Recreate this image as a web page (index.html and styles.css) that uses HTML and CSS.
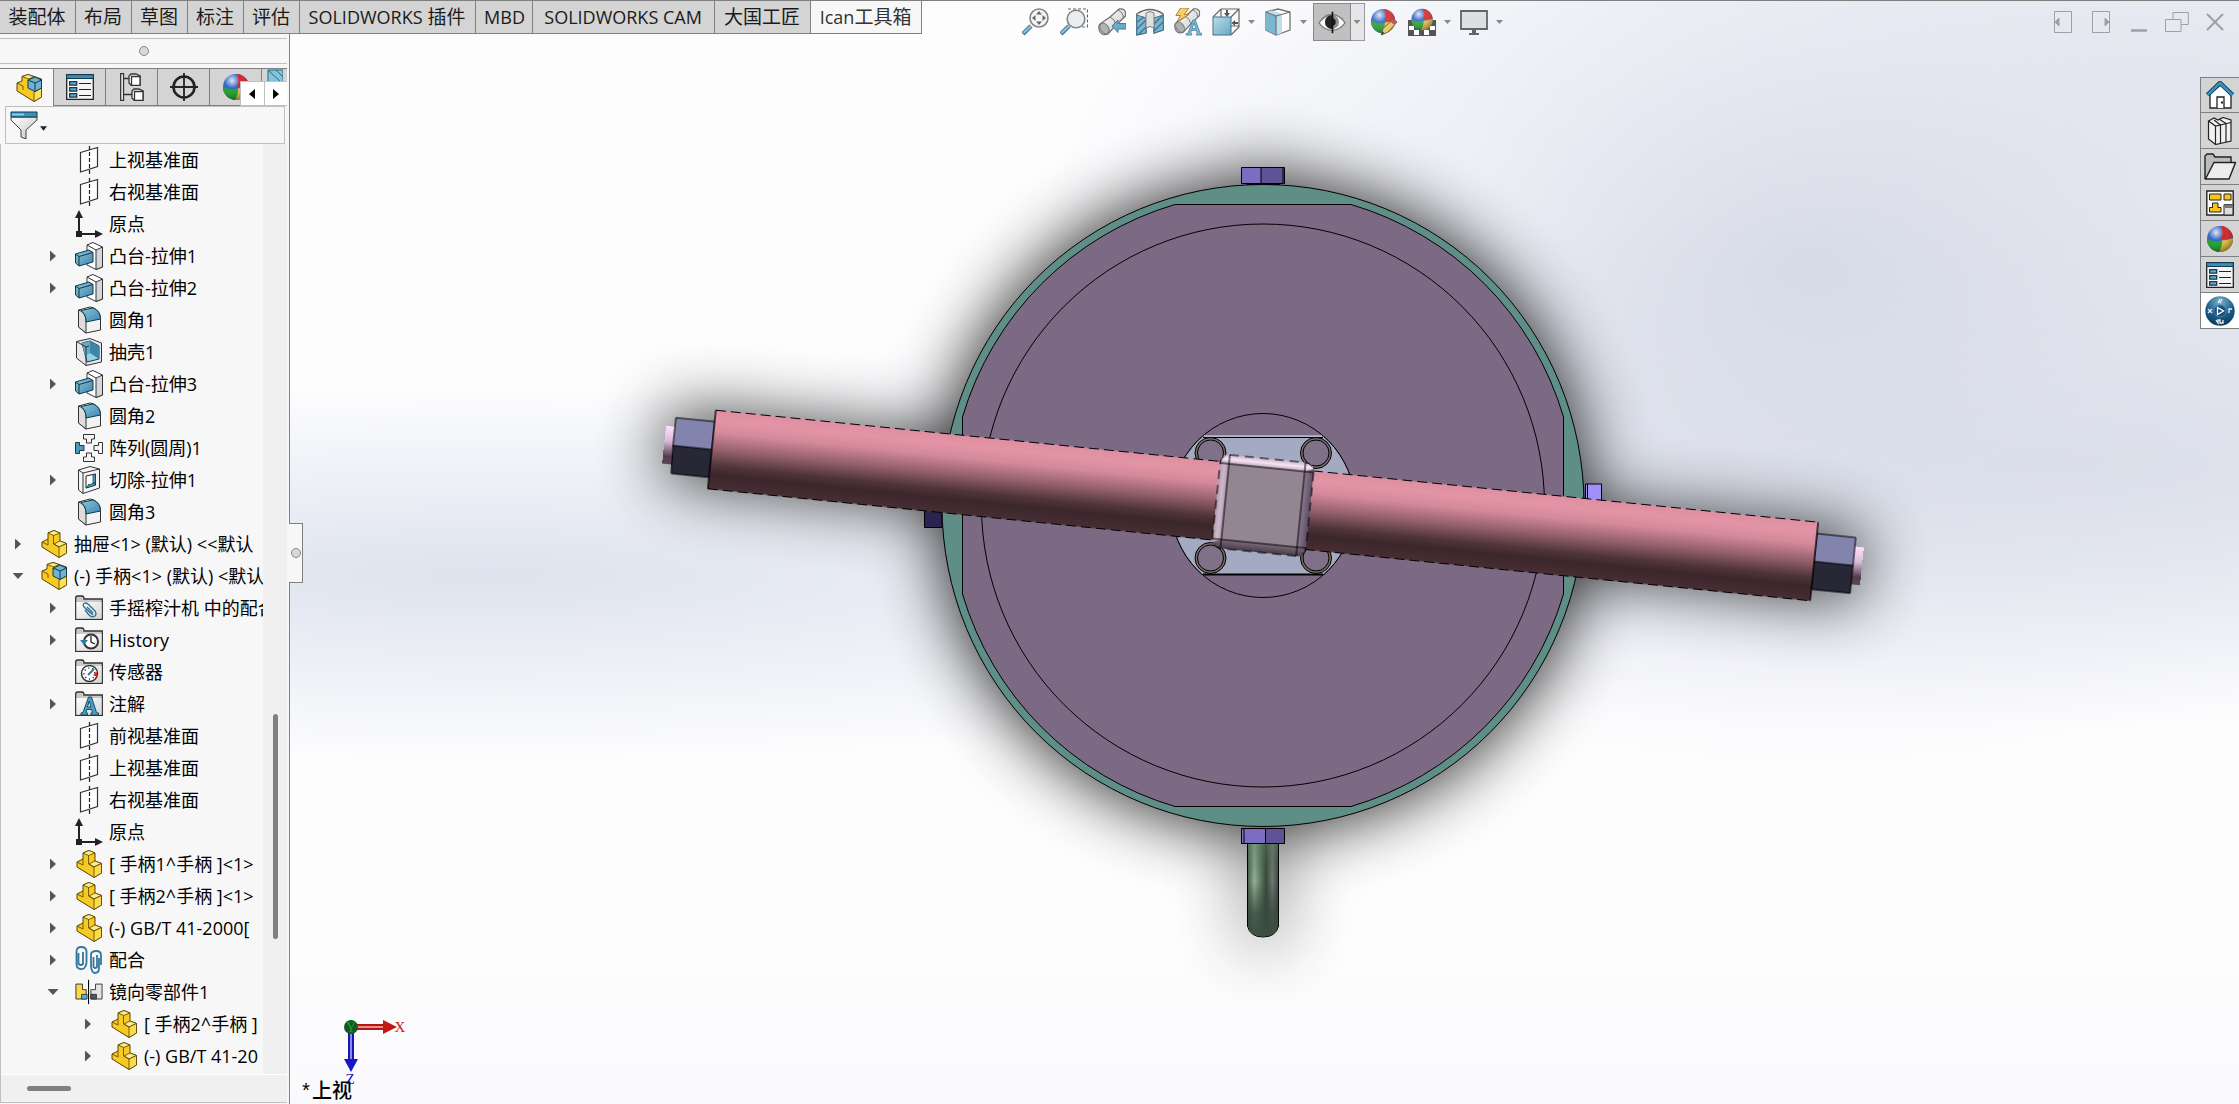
FILE: index.html
```html
<!DOCTYPE html>
<html lang="zh-CN">
<head>
<meta charset="utf-8">
<title>手摇榨汁机 - 装配体</title>
<link rel="stylesheet" href="styles.css">
</head>
<body>
<svg class="defs" width="0" height="0" aria-hidden="true">
  <defs>
    <linearGradient id="steel" x1="0" y1="0" x2="1" y2="1"><stop offset="0" stop-color="#fff"/><stop offset="1" stop-color="#c4c4c4"/></linearGradient>
    <linearGradient id="blue" x1="0" y1="0" x2="1" y2="1"><stop offset="0" stop-color="#8cc6de"/><stop offset="1" stop-color="#3d86a8"/></linearGradient>
    <linearGradient id="sky" x1="0" y1="0" x2="1" y2="1"><stop offset="0" stop-color="#b4dbea"/><stop offset="1" stop-color="#5b9fbd"/></linearGradient>
    <radialGradient id="gloss" cx=".35" cy=".25" r=".75"><stop offset="0" stop-color="#fff" stop-opacity=".85"/><stop offset=".4" stop-color="#fff" stop-opacity=".05"/><stop offset="1" stop-color="#000" stop-opacity=".35"/></radialGradient>
    <radialGradient id="disc" cx=".5" cy=".2" r=".9"><stop offset="0" stop-color="#7fb2d0"/><stop offset=".5" stop-color="#1f5f8b"/><stop offset="1" stop-color="#06304f"/></radialGradient>
    <linearGradient id="folderFill" x1="0" y1="0" x2="1" y2="1"><stop offset="0" stop-color="#fff"/><stop offset="1" stop-color="#d5d5d5"/></linearGradient>
  </defs>
  <symbol id="plane" viewBox="0 0 28 28"><path d="M5.500 6.500L22.500 1.500V20.500L5.500 26Z" fill="#fff" stroke="#333" stroke-width="1.200"/><path d="M14.500 0V28" stroke="#222" stroke-width="1.200" stroke-dasharray="4 2"/></symbol>
  <symbol id="origin" viewBox="0 0 28 28"><path d="M4 24V5M4 24H22" stroke="#222" stroke-width="2" fill="none"/><path d="M0 8L4 0L8 8ZM20 20L28 24L20 28ZM1 21h6v6H1Z" fill="#222"/></symbol>
  <symbol id="boss" viewBox="0 0 28 28"><path d="M12 3L18 0.500L27.500 5V25L21 27.500L12 23Z" fill="#fff" stroke="#333"/><path d="M21 8L27.500 5V25L21 27.500Z" fill="#d6d6d6" stroke="#333"/><path d="M12 3L21 8" stroke="#333"/><path d="M0.500 12L14 8L18 10.500V20L4 24L0.500 21Z" fill="url(#blue)" stroke="#12394c"/><path d="M0.500 12L4 14.500V24M4 14.500L18 10.500" stroke="#12394c" fill="none"/></symbol>
  <symbol id="fillet" viewBox="0 0 28 28"><path d="M3.500 4L15 1C22 2 25.500 7 25.500 13V24L11 27L3.500 21Z" fill="#f2f2f2" stroke="#333"/><path d="M3.500 4C9 6 11 10 11 16V27L3.500 21Z" fill="#ddd" stroke="#333"/><path d="M6 4.500L18 2C23 4 25.500 8 25.500 13L11 16C11 10 9 7 6 4.500Z" fill="url(#blue)" stroke="#12394c"/></symbol>
  <symbol id="shell" viewBox="0 0 28 28"><path d="M1.500 3.500L15 0.500L26.500 5V24L11 27.500L1.500 20Z" fill="#e8e8e8" stroke="#333"/><path d="M7 5L15 3L24 8V21L12 24Z" fill="#8fd2ea" stroke="#12394c"/><path d="M15 3L24 8V21L15 15Z" fill="#3d86a8"/><path d="M7 5L15 3V15L10 18Z" fill="#64a9c6"/><path d="M1.500 3.500L11 9V27.500M11 9L14 8" stroke="#333" fill="none"/></symbol>
  <symbol id="pattern" viewBox="0 0 28 28"><g fill="#f4f4f4" stroke="#333"><path d="M8.500 .5H19.500V5H16.500V9H11.500V5H8.500Z"/><path d="M8.500 27.500H19.500V23H16.500V19H11.500V23H8.500Z"/><path d="M27.500 8.500V19.500H23.500V16.500H19V11.500H23.500V8.500Z"/><path d="M.5 8.500V19.500H4.500V16.500H9V11.500H4.500V8.500Z" fill="#4c9abc"/></g></symbol>
  <symbol id="cut" viewBox="0 0 28 28"><path d="M3.500 4L15 .5L24.500 3V22L8 27.500L3.500 24Z" fill="#f4f4f4" stroke="#333"/><path d="M8 7L24.500 3M8 7V27.500M3.500 4L8 7" stroke="#333" fill="none"/><path d="M11 10L20.500 8V19L11 22Z" fill="#fff" stroke="#222"/><path d="M11 22L14 18V19L20.500 16V19ZM18 9L20.500 8V19L18 17Z" fill="#4c9abc" stroke="#12394c" stroke-width=".7"/></symbol>
  <symbol id="part" viewBox="0 0 28 28"><path d="M2 12L8 9V3L14 .5L20 3V11L26.500 13.500V23L19 27.500L2 17Z" fill="#f6c923" stroke="#5a4300"/><path d="M8 3L13.500 5.500L20 3L14 .5ZM14 14L20 11L26.500 13.500L19 17Z" fill="#fbe98a" stroke="#5a4300" stroke-width=".8"/><path d="M19 17L26.500 13.500V23L19 27.500Z" fill="#f9dc4d" stroke="#5a4300" stroke-width=".8"/><path d="M13.500 5.500V14L19 17M2 12L8 15V9" stroke="#5a4300" stroke-width=".8" fill="none"/></symbol>
  <symbol id="asm" viewBox="0 0 28 28"><path d="M2 9L7 7V2.500L13 .5L19 2.500L26.500 5V23L19 27.500L2 17Z" fill="#f6c923" stroke="#5a4300"/><path d="M7 2.500L13 .5L19 2.500L14 5Z" fill="#fbe98a" stroke="#5a4300" stroke-width=".8"/><path d="M19 18L26.500 14V23L19 27.500Z" fill="#fbe05c" stroke="#5a4300" stroke-width=".8"/><path d="M13 6L20 3L26.500 6V14L20 17.500L13 14Z" fill="#6fb2d2" stroke="#12394c"/><path d="M13 6L20 9L26.500 6M20 9V17.500" stroke="#12394c" fill="none"/><path d="M2 9L8 12V16" stroke="#5a4300" stroke-width=".8" fill="none"/></symbol>
  <symbol id="folder" viewBox="0 0 28 28"><path d="M.7 25.300V3.500Q.7 2 2.200 2H7Q9 2 9 5H27.300V25.300Z" fill="#c9c9c9" stroke="#333" stroke-width="1.300"/><path d="M1.500 8H26.600V24.600H1.500Z" fill="url(#folderFill)"/></symbol>
  <symbol id="f-mate" viewBox="0 0 28 28"><use href="#folder"/><path d="M18 21L9 13Q7 10 10 9Q12 9 13 10L20 17Q22 20 20 22Q17 24 14 21L10 16M18 19L12 13" fill="none" stroke="#2b6f92" stroke-width="1.300"/></symbol>
  <symbol id="f-hist" viewBox="0 0 28 28"><use href="#folder"/><circle cx="16" cy="15.500" r="7" fill="#fff" stroke="#333" stroke-width="2"/><path d="M16 10V16L20 18" stroke="#222" fill="none" stroke-width="1.300"/><path d="M5 14H13L9 19Z" fill="#2b7da3"/></symbol>
  <symbol id="f-sens" viewBox="0 0 28 28"><use href="#folder"/><circle cx="14.500" cy="15.500" r="8" fill="#fff" stroke="#333" stroke-width="1.400"/><circle cx="14.500" cy="15.500" r="5.500" fill="none" stroke="#222" stroke-width="1.500" stroke-dasharray="1 3"/><path d="M13 17L19 11" stroke="#2b7da3" stroke-width="2"/><path d="M18 17L22 14V19Z" fill="#d22"/></symbol>
  <symbol id="f-note" viewBox="0 0 28 28"><use href="#folder"/><path d="M6 25V23L8 22.500L13.500 7H16.500L21.500 22.500L23.500 23V25H16V23L17.500 22.500L16.600 19.500H11.800L11 22.500L12.500 23V25ZM12.500 17H16L14.300 11Z" fill="#4c9fc2" stroke="#0f4059" stroke-width=".9"/></symbol>
  <symbol id="mates" viewBox="0 0 28 28"><g fill="none" stroke="#33789a" stroke-width="1.800"><path d="M3.500 7V18Q6 20 8 18V6M1.500 18V5Q2 1 6 1Q11 1 11.500 5V17Q10 24 6 23Q1.500 23 1.500 18Z"/><path d="M18.500 11V21Q20 23 22 21V9M16 21V8Q17 5 21 5Q26 5 26 9V19M16 21Q17 27 20 27Q24 27 24 22V12"/></g></symbol>
  <symbol id="mirror" viewBox="0 0 30 28"><path d="M1 5.500H8V11.500H12V21.500H1Z" fill="#f9d94a" stroke="#333"/><path d="M29 5.500H22V11.500H17V21.500H29Z" fill="#e4e4e4" stroke="#333"/><path d="M7 16.500h6v5H7Z" fill="#4cb2d8" stroke="#222" stroke-width=".8"/><path d="M17 16.500h6v5h-6Z" fill="#555" stroke="#222" stroke-width=".8"/><path d="M14.500 1V27" stroke="#000" stroke-width="1.200"/></symbol>
  <symbol id="props" viewBox="0 0 28 28"><path d="M.7 1.700H27.300V26.300H.7Z" fill="#f6f6f6" stroke="#222" stroke-width="1.300"/><path d="M.7 1.700H27.300V5.500H.7Z" fill="#3f8db2" stroke="#123a50"/><g fill="#5ba9cc" stroke="#123a50" stroke-width="1.300"><path d="M3.700 8.700h7v3.500h-7ZM3.700 14.700h7v3.500h-7ZM3.700 20.700h7v3.500h-7Z"/></g><path d="M13 10.500H25M13 16.500H25M13 22.500H25" stroke="#222" stroke-width="1.200"/></symbol>
  <symbol id="config" viewBox="0 0 28 28"><path d="M2.700 .7H5.500V27.300H2.700ZM5.500 5.500H11M5.500 21.500H15" fill="#fff" stroke="#333" stroke-width="1.300"/><g fill="#fff" stroke="#333" stroke-width="1.300"><path d="M11 3L13 1H18L22 3V12H13L11 10Z"/><path d="M13.500 3.500H22V12.300H13.500Z"/><path d="M14 18L16 16H21L25 18V27H16L14 25Z"/><path d="M16.500 18.500H25V27.300H16.500Z"/></g></symbol>
  <symbol id="target" viewBox="0 0 28 28"><circle cx="14" cy="14" r="10.500" fill="none" stroke="#222" stroke-width="2.600"/><path d="M14 0V28M0 14H28" stroke="#222" stroke-width="1.800"/></symbol>
  <symbol id="ball" viewBox="0 0 28 28"><circle cx="14" cy="14" r="13" fill="#2c5fc0"/><path d="M16 14Q17 7 15 1A13 13 0 0 1 27 13Q22 14.500 16 14Z" fill="#d01a1f"/><path d="M1 14.500Q8 17 16 15.500Q16 22 13 27A13 13 0 0 1 1 14.500Z" fill="#12a01e"/><path d="M16 15.500Q22 15 27 13A13 13 0 0 1 13 27Q16 22 16 15.500Z" fill="#eac03a"/><circle cx="14" cy="14" r="13" fill="url(#gloss)"/></symbol>
  <symbol id="home" viewBox="0 0 28 28"><path d="M4 13V27H25V13L14.500 4Z" fill="#fff" stroke="#222" stroke-width="1.300"/><path d="M1.500 14L14 2L26.500 14" fill="none" stroke="#0f4563" stroke-width="4.500"/><path d="M1.500 14L14 2L26.500 14" fill="none" stroke="#3b91b8" stroke-width="2.500"/><path d="M11 27V16H18V27" fill="#fff" stroke="#222" stroke-width="1.300"/><path d="M15 21.500h2" stroke="#222" stroke-width="2"/></symbol>
  <symbol id="books" viewBox="0 0 28 28"><path d="M2.500 4L8 1L12 3L17 .5L25 3V24L9.500 27.500L2.500 22Z" fill="#f0f0f0" stroke="#222" stroke-width="1.200"/><path d="M2.500 4L9.500 9L25 5.500M9.500 9V27.500M14.500 8V26M20 6.500V25M8 3L14.500 8M13 2L20 6.500" fill="none" stroke="#222" stroke-width="1.200"/></symbol>
  <symbol id="open" viewBox="0 0 32 28"><path d="M1 26V3L3 1H9L11 4H27V10" fill="#bdbdbd" stroke="#222" stroke-width="1.400"/><path d="M10 9.500H31.500L25 26H1.500Z" fill="#ededed" stroke="#222" stroke-width="1.400"/></symbol>
  <symbol id="palette" viewBox="0 0 28 28"><path d="M.8 2H27.200V26H.8Z" fill="#fff" stroke="#222" stroke-width="1.400"/><path d="M3.500 5H15V11H3.500ZM18 5H25V11H18ZM3.500 23V18.500H6.500V14H12V18.500H15V23Z" fill="#f5c518" stroke="#222"/><path d="M18 15.500H27V26H18Z" fill="#ddd" stroke="#222"/><path d="M18 15.500H27V19H18Z" fill="#777"/></symbol>
  <symbol id="wheel" viewBox="0 0 30 30"><circle cx="15" cy="15" r="14.700" fill="url(#disc)"/><circle cx="15" cy="15" r="6" fill="#174f78" stroke="#3d83ac"/><path d="M12.500 11.500V18.500L18.500 15Z" fill="none" stroke="#fff" stroke-width="1.300"/><path d="M3 13L7 17M7 13L3 17M13 7L15 3M15 7L17 3M24 17V13H27M11 24L13 27V24H15V27H18V24" stroke="#e8f2f8" stroke-width="1.300" fill="none"/></symbol>
  <symbol id="zoomfit" viewBox="0 0 28 28"><path d="M1 26L9 18" stroke="#2e718f" stroke-width="4.500"/><path d="M1.500 25L9 18" stroke="#88bdd3" stroke-width="2"/><circle cx="17" cy="10" r="9" fill="#f3f5f6" stroke="#777" stroke-width="1.600"/><path d="M17 3L20 6.500H14ZM17 17L14 13.500H20ZM10 10L13.500 7V13ZM24 10L20.500 13V7Z" fill="#555"/></symbol>
  <symbol id="zoomarea" viewBox="0 0 28 28"><path d="M8 1H27.500V19H21" fill="none" stroke="#555" stroke-width="1.200" stroke-dasharray="3 2"/><path d="M1 26L9 18" stroke="#2e718f" stroke-width="4.500"/><path d="M1.500 25L9 18" stroke="#88bdd3" stroke-width="2"/><circle cx="16" cy="11" r="8.800" fill="#e6edf1" stroke="#777" stroke-width="1.600"/></symbol>
  <symbol id="scope" viewBox="0 0 28 28"><path d="M2 16L12 9L21 1Q26 0 27.500 4V8L18 17L10 26Q4 28 1.500 23Q0 18 2 16Z" fill="url(#steel)" stroke="#666" stroke-width="1.300"/><ellipse cx="6.500" cy="20.500" rx="4" ry="6" transform="rotate(-35 6.500 20.500)" fill="#aaa" stroke="#666"/><path d="M12 9Q17 11 18 17M20 2Q25 4 25.500 10" stroke="#666" fill="none"/></symbol>
  <symbol id="prev" viewBox="0 0 28 28"><use href="#scope"/><path d="M14 18L20 12V15.500H28V21H20V24.500Z" fill="#5ba4c4" stroke="#2e718f"/></symbol>
  <symbol id="section" viewBox="0 0 28 28"><path d="M.8 6Q14 -3 27.200 6V22L18 25V20Q14 16 10 20V25L.8 27Z" fill="#ececec" stroke="#555" stroke-width="1.300"/><path d="M.8 7L10 10V25L.8 27ZM18 10L27.200 7V22L18 25Z" fill="#6eb0cd" stroke="#2a6480"/><path d="M1 14L8 9M1 21L10 12M3 26L10 19M18 16L26 8M18 23L27 14" stroke="#2a6480" stroke-width="1.300"/><path d="M10 5Q14 2 18 5V20Q14 17 10 20Z" fill="#ddd" stroke="#777"/></symbol>
  <symbol id="dynview" viewBox="0 0 30 30"><use href="#scope" width="28" height="28"/><path d="M7 0H16L11 7H16L3 15L7 8H2Z" fill="#f5cd55" stroke="#9b6a22"/><path d="M13 29V27.500L15 27L20 13H23L28 27L30 27.500V29H24V27.500L25 27L24 24H18.500L18 27L19 27.500V29ZM19.500 22H23.500L21.300 16Z" fill="#6eb0cd" stroke="#2e718f" stroke-width=".8"/></symbol>
  <symbol id="orient" viewBox="0 0 28 28"><path d="M1 9L9 1H27V19L19 27M9 1V9M27 1L19 9M9 18H27M1 27L9 19" fill="none" stroke="#555" stroke-width="1.200"/><path d="M1 9H19V27H1Z" fill="url(#sky)" stroke="#2a6480"/><path d="M15 2V6M26 15H22" stroke="#444" stroke-width="2"/><path d="M12 5H18L15 9ZM23 12V18L19.500 15Z" fill="#444"/></symbol>
  <symbol id="display" viewBox="0 0 28 28"><path d="M2 4L14 1L26 4V22L12 27L2 22Z" fill="#fff" stroke="#666" stroke-width="1.300"/><path d="M2 4L12 8V27L2 22Z" fill="#6eb0cd"/><path d="M12 8L18 6V25L12 27ZM2 4L8 2.500L18 6L12 8Z" fill="#b9dcea"/><path d="M2 4L12 8L26 4M12 8V27" fill="none" stroke="#555"/></symbol>
  <symbol id="eye" viewBox="0 0 30 28"><path d="M1 15Q8 6 15 6Q23 6 29 15Q23 23 15 23Q7 23 1 15Z" fill="#fff" stroke="#777" stroke-width="1.400"/><circle cx="15" cy="14" r="7.500" fill="#8a8a8a"/><path d="M15 6.500A7.500 7.500 0 0 0 15 21.500Z" fill="#111"/><circle cx="15" cy="14" r="4" fill="#111"/><path d="M3 11Q14 0 27 11" fill="none" stroke="#777"/><path d="M15.500 3V26" stroke="#000" stroke-width="1.800"/></symbol>
  <symbol id="appear" viewBox="0 0 30 30"><use href="#ball" width="28" height="28"/><path d="M12 29L14 22L25 12L29 15L19 26Z" fill="#ecc65a" stroke="#555"/><path d="M25 12L29 15L26 18L22 15Z" fill="#b34b42"/><path d="M12 29L13 25L16 27Z" fill="#333"/></symbol>
  <symbol id="scene" viewBox="0 0 28 28"><path d="M0 12H28V28H0Z" fill="#444"/><path d="M1 18h5v4H1ZM22 18h5v4h-5ZM6 22h5v5H6ZM16 22h5v5h-5ZM11 18h5v4h-5Z" fill="#fff"/><use href="#ball" x="2" y="0" width="24" height="23"/></symbol>
  <symbol id="screen" viewBox="0 0 28 28"><path d="M1 3H27V21H1Z" fill="#d9dfe0" stroke="#555" stroke-width="1.800"/><path d="M12 21H16V25H19V27H9V25H12Z" fill="#555"/></symbol>
  <symbol id="funnel" viewBox="0 0 28 28"><path d="M1 6H27V9L16 19V28L11 26V19L1 9Z" fill="url(#steel)" stroke="#444"/><path d="M1 1H27V6H1Z" fill="#3b91b8" stroke="#123a50"/><path d="M2 2.500H14V4.500H2Z" fill="#7fd0ee"/></symbol>
</svg>

<div class="app">
  <nav class="ribbon" aria-label="命令选项卡">
    <button class="ribbon-tab assembly">装配体</button><button class="ribbon-tab">布局</button><button class="ribbon-tab">草图</button><button class="ribbon-tab">标注</button><button class="ribbon-tab">评估</button><button class="ribbon-tab addins"><span class="latin">SOLIDWORKS</span> 插件</button><button class="ribbon-tab mbd"><span class="latin">MBD</span></button><button class="ribbon-tab cam"><span class="latin">SOLIDWORKS CAM</span></button><button class="ribbon-tab craft">大国工匠</button><button class="ribbon-tab ican active"><span class="latin">Ican</span>工具箱</button>
  </nav>

  <aside class="panel">
    <div class="splitter"><span class="grip"></span></div>
    <div class="manager-tabs">
      <button class="manager-tab active" aria-label="设计树"><svg><use href="#asm"/></svg></button>
      <button class="manager-tab" aria-label="属性"><svg><use href="#props"/></svg></button>
      <button class="manager-tab" aria-label="配置"><svg><use href="#config"/></svg></button>
      <button class="manager-tab" aria-label="尺寸专家"><svg><use href="#target"/></svg></button>
      <button class="manager-tab" aria-label="外观"><svg><use href="#ball"/></svg></button>
      <button class="manager-tab last" aria-label="CAM"><svg viewBox="0 0 16 16"><path d="M1 1H16V15H1ZM1 1L16 15M9 1L16 8" fill="#86c3dc" stroke="#2a6480"/></svg></button>
      <div class="tab-scroll"><button aria-label="向左"><svg viewBox="0 0 10 10"><path d="M8 0V10L2 5Z"/></svg></button><button aria-label="向右"><svg viewBox="0 0 10 10"><path d="M2 0V10L8 5Z"/></svg></button></div>
    </div>
    <div class="filter"><button aria-label="过滤器"><svg class="funnel"><use href="#funnel"/></svg><svg class="down" viewBox="0 0 8 5"><path d="M0 0H8L4 5Z"/></svg></button></div>
    <div class="tree-area">
      <ul class="tree">
        <li class="row l1"><svg class="ico"><use href="#plane"/></svg>上视基准面</li>
        <li class="row l1"><svg class="ico"><use href="#plane"/></svg>右视基准面</li>
        <li class="row l1"><svg class="ico"><use href="#origin"/></svg>原点</li>
        <li class="row l1"><button class="tw" aria-label="展开"></button><svg class="ico"><use href="#boss"/></svg>凸台-拉伸1</li>
        <li class="row l1"><button class="tw" aria-label="展开"></button><svg class="ico"><use href="#boss"/></svg>凸台-拉伸2</li>
        <li class="row l1"><svg class="ico"><use href="#fillet"/></svg>圆角1</li>
        <li class="row l1"><svg class="ico"><use href="#shell"/></svg>抽壳1</li>
        <li class="row l1"><button class="tw" aria-label="展开"></button><svg class="ico"><use href="#boss"/></svg>凸台-拉伸3</li>
        <li class="row l1"><svg class="ico"><use href="#fillet"/></svg>圆角2</li>
        <li class="row l1"><svg class="ico"><use href="#pattern"/></svg>阵列(圆周)1</li>
        <li class="row l1"><button class="tw" aria-label="展开"></button><svg class="ico"><use href="#cut"/></svg>切除-拉伸1</li>
        <li class="row l1"><svg class="ico"><use href="#fillet"/></svg>圆角3</li>
        <li class="row l0"><button class="tw" aria-label="展开"></button><svg class="ico"><use href="#part"/></svg>抽屉&lt;1&gt; (默认) &lt;&lt;默认</li>
        <li class="row l0"><button class="tw open" aria-label="折叠"></button><svg class="ico"><use href="#asm"/></svg>(-) 手柄&lt;1&gt; (默认) &lt;默认</li>
        <li class="row l1"><button class="tw" aria-label="展开"></button><svg class="ico"><use href="#f-mate"/></svg>手摇榨汁机 中的配合</li>
        <li class="row l1"><button class="tw" aria-label="展开"></button><svg class="ico"><use href="#f-hist"/></svg>History</li>
        <li class="row l1"><svg class="ico"><use href="#f-sens"/></svg>传感器</li>
        <li class="row l1"><button class="tw" aria-label="展开"></button><svg class="ico"><use href="#f-note"/></svg>注解</li>
        <li class="row l1"><svg class="ico"><use href="#plane"/></svg>前视基准面</li>
        <li class="row l1"><svg class="ico"><use href="#plane"/></svg>上视基准面</li>
        <li class="row l1"><svg class="ico"><use href="#plane"/></svg>右视基准面</li>
        <li class="row l1"><svg class="ico"><use href="#origin"/></svg>原点</li>
        <li class="row l1"><button class="tw" aria-label="展开"></button><svg class="ico"><use href="#part"/></svg>[ 手柄1^手柄 ]&lt;1&gt;</li>
        <li class="row l1"><button class="tw" aria-label="展开"></button><svg class="ico"><use href="#part"/></svg>[ 手柄2^手柄 ]&lt;1&gt;</li>
        <li class="row l1"><button class="tw" aria-label="展开"></button><svg class="ico"><use href="#part"/></svg>(-) GB∕T 41-2000[</li>
        <li class="row l1"><button class="tw" aria-label="展开"></button><svg class="ico"><use href="#mates"/></svg>配合</li>
        <li class="row l1"><button class="tw open" aria-label="折叠"></button><svg class="ico"><use href="#mirror"/></svg>镜向零部件1</li>
        <li class="row l2"><button class="tw" aria-label="展开"></button><svg class="ico"><use href="#part"/></svg>[ 手柄2^手柄 ]</li>
        <li class="row l2"><button class="tw" aria-label="展开"></button><svg class="ico"><use href="#part"/></svg>(-) GB∕T 41-20</li>
      </ul>
      <div class="vbar"><span class="vthumb"></span></div>
      <div class="hbar"><span class="hthumb"></span></div>
    </div>
    <div class="foot"></div>
  </aside>

  <main class="viewport">
    <svg class="model" viewBox="290 1 1949 1103" preserveAspectRatio="xMidYMid slice" role="img" aria-label="装配体模型">
      <defs>
        <filter id="soft" x="-30%" y="-30%" width="160%" height="160%"><feGaussianBlur stdDeviation="34"/></filter>
        <linearGradient id="rod" x1="0" y1="0" x2="0" y2="1"><stop offset="0" stop-color="#dd8fa1"/><stop offset=".12" stop-color="#e395a6"/><stop offset=".28" stop-color="#d48a9a"/><stop offset=".5" stop-color="#94606b"/><stop offset=".7" stop-color="#50353b"/><stop offset=".82" stop-color="#3a262b"/><stop offset="1" stop-color="#482e34"/></linearGradient>
        <linearGradient id="stud" x1="0" y1="0" x2="0" y2="1"><stop offset="0" stop-color="#fde2fb"/><stop offset=".4" stop-color="#dcb8d8"/><stop offset=".8" stop-color="#4f3d4d"/><stop offset="1" stop-color="#5b465a"/></linearGradient>
        <linearGradient id="capTop" x1="0" y1="0" x2="0" y2="1"><stop offset="0" stop-color="#cdb6cb"/><stop offset=".5" stop-color="#f8e4f6"/><stop offset="1" stop-color="#b8a3b6"/></linearGradient>
        <linearGradient id="capSide" x1="0" y1="0" x2="1" y2="0"><stop offset="0" stop-color="#b09bb0"/><stop offset=".05" stop-color="#d0b9cf"/><stop offset=".1" stop-color="#a590a4"/><stop offset=".9" stop-color="#8d7b92"/><stop offset="1" stop-color="#5c4c62"/></linearGradient>
        <linearGradient id="capBot" x1="0" y1="0" x2="0" y2="1"><stop offset="0" stop-color="#7a6a78"/><stop offset="1" stop-color="#463c47"/></linearGradient>
        <linearGradient id="hook" x1="0" y1="0" x2="1" y2="0"><stop offset="0" stop-color="#46604e"/><stop offset=".22" stop-color="#9cbfa0"/><stop offset=".6" stop-color="#3a4a3d"/><stop offset=".8" stop-color="#777f79"/><stop offset="1" stop-color="#3b4a3f"/></linearGradient>
        <linearGradient id="hookFade" x1="0" y1="0" x2="0" y2="1"><stop offset="0" stop-color="#4f7355" stop-opacity=".5"/><stop offset=".4" stop-color="#2f3f33" stop-opacity=".1"/><stop offset=".75" stop-color="#35463a" stop-opacity=".8"/><stop offset="1" stop-color="#3d4f41"/></linearGradient>
        <clipPath id="hub"><path d="M1170 436.500H1356V575H1170Z"/></clipPath>
      </defs>
      <g filter="url(#soft)" fill="#000" opacity=".86">
        <circle cx="1263" cy="505.500" r="324"/>
        <path d="M-600 -34H600V34H-600Z" transform="translate(1263 505.500) rotate(5.800)" opacity=".95"/>
        <path d="M1243 160H1284V945H1243Z" opacity=".5"/>
      </g>
      <g stroke="#000" stroke-width="1">
        <path d="M1241.500 167.500H1284.500V183.500H1241.500Z" fill="#5f5297"/><path d="M1241.500 167.500H1261V183.500H1241.500Z" fill="#7d6dc2"/><path d="M1283 168V183M1247 184.500H1280"/>
        <path d="M924.500 508H942V527.500H924.500Z" fill="#2b2350"/><path d="M1585.500 484H1601.500V502H1585.500Z" fill="#a28ffb"/><path d="M1587.500 484V500"/>
        <path d="M1247.500 842H1278.500V926Q1276 937 1263 937Q1250 937 1247.500 926Z" fill="url(#hook)"/><path d="M1248 844H1278V926Q1276 936.500 1263 936.500Q1250 936.500 1248 926Z" fill="url(#hookFade)" stroke="none"/>
        <circle cx="1263" cy="505.500" r="321" fill="#5f8e87"/>
        <path d="M1241.500 828.500H1284.500V843.500H1241.500Z" fill="#5f5297"/><path d="M1241.500 828.500H1265.500V843.500H1241.500Z" fill="#7d6dc2"/><path d="M1244 828V843"/>
        <path d="M1175 204.500H1351A314 314 0 0 1 1563.500 417V594A314 314 0 0 1 1351 806.500H1175A314 314 0 0 1 962.500 594V417A314 314 0 0 1 1175 204.500Z" fill="#7c6a84"/>
        <g fill="none"><circle cx="1263" cy="505.500" r="281.500"/><circle cx="1263" cy="505.500" r="92"/></g>
        <circle cx="1263" cy="505.500" r="92" fill="#a4aac2" clip-path="url(#hub)"/>
        <path d="M1203 437.500H1323"/><path d="M1204 436H1322" stroke="#dde0ee"/><path d="M1203 574.500H1323" stroke-width="2"/>
        <g fill="#766a66"><circle cx="1210.500" cy="453" r="15.500"/><circle cx="1316" cy="453" r="15.500"/><circle cx="1210.500" cy="558" r="15.500"/><circle cx="1316" cy="558" r="15.500"/></g>
        <g fill="#7f7187"><circle cx="1210.500" cy="453" r="13"/><circle cx="1316" cy="453" r="13"/><circle cx="1210.500" cy="558" r="13"/><circle cx="1316" cy="558" r="13"/></g>
      </g>
      <g transform="translate(1263 505.500) rotate(5.800)">
        <path d="M-602 -19H-592V19H-602ZM592 -19H602V19H592Z" fill="url(#stud)"/>
        <g stroke="#000"><path d="M-593 -28H-554V1H-593ZM554 -28H593V1H554Z" fill="#8384ae"/><path d="M-593 0L-592 28H-554V0ZM554 0H593V28H554Z" fill="#282735"/></g>
        <path d="M-554 -39.500H554V39.500H-554Z" fill="url(#rod)"/>
        <path d="M-554 -39.500H554M-554 39.500H554" stroke="#000" stroke-dasharray="10 5"/>
        <path d="M-554 -39.500V39.500M554 -39.500V39.500" stroke="#000" stroke-width="1.300"/>
        <rect x="-47" y="-47" width="94" height="94" rx="9" fill="url(#capSide)"/>
        <path d="M-38 -47H38Q46 -47 46 -41L38 -38H-38L-46 -41Q-46 -47 -38 -47Z" fill="url(#capTop)"/>
        <path d="M-38 38H38L46 41Q46 47 38 47H-38Q-46 47 -46 41Z" fill="url(#capBot)"/>
        <path d="M-38 -38H38V38H-38Z" fill="#948593"/>
        <path d="M-47 -38H47M-47 38H47M-38 -47V47M38 -47V47" stroke="#000"/>
        <rect x="-47" y="-47" width="94" height="94" rx="9" fill="none" stroke="#000" stroke-dasharray="9 6"/>
      </g>
    </svg>

    <div class="hud">
      <button class="tool" aria-label="整屏显示"><svg><use href="#zoomfit"/></svg></button><button class="tool" aria-label="局部放大"><svg><use href="#zoomarea"/></svg></button><button class="tool" aria-label="上一视图"><svg><use href="#prev"/></svg></button><button class="tool" aria-label="剖面视图"><svg><use href="#section"/></svg></button><button class="tool" aria-label="动态注解视图"><svg><use href="#dynview"/></svg></button><button class="tool" aria-label="视图定向"><svg><use href="#orient"/></svg></button><button class="caret" aria-label="更多定向"></button><button class="tool" aria-label="显示样式"><svg><use href="#display"/></svg></button><button class="caret" aria-label="更多样式"></button><button class="tool pressed" aria-label="隐藏显示项目"><svg><use href="#eye"/></svg></button><button class="caret framed" aria-label="更多项目"></button><button class="tool" aria-label="编辑外观"><svg><use href="#appear"/></svg></button><button class="tool" aria-label="应用布景"><svg><use href="#scene"/></svg></button><button class="caret" aria-label="更多布景"></button><button class="tool" aria-label="视图设定"><svg><use href="#screen"/></svg></button><button class="caret" aria-label="更多设定"></button>
    </div>

    <div class="window-controls">
      <button aria-label="左侧窗格"><svg viewBox="0 0 24 24"><path d="M3.500 1.500H20.500V22.500H3.500Z"/><path d="M8 8V16L4 12Z" fill="#a0a0a0"/></svg></button>
      <button aria-label="右侧窗格"><svg viewBox="0 0 24 24"><path d="M3.500 1.500H20.500V22.500H3.500Z"/><path d="M16 8V16L20 12Z" fill="#a0a0a0"/></svg></button>
      <button aria-label="最小化"><svg viewBox="0 0 24 24"><path d="M4 20.500H20" stroke-width="2.500"/></svg></button>
      <button aria-label="还原"><svg viewBox="0 0 24 24"><path d="M.5 9.500H16V21.500H.5ZM8 9V2.500H23.300V14.500H16"/></svg></button>
      <button aria-label="关闭"><svg viewBox="0 0 24 24"><path d="M4 4L20 20M20 4L4 20" stroke-width="2"/></svg></button>
    </div>

    <div class="task-pane">
      <button class="first" aria-label="资源"><svg><use href="#home"/></svg></button>
      <button aria-label="设计库"><svg><use href="#books"/></svg></button>
      <button aria-label="文件探索器"><svg class="wide"><use href="#open"/></svg></button>
      <button aria-label="视图调色板"><svg><use href="#palette"/></svg></button>
      <button aria-label="外观布景"><svg><use href="#ball"/></svg></button>
      <button aria-label="自定义属性"><svg><use href="#props"/></svg></button>
      <button class="active" aria-label="论坛"><svg class="wide"><use href="#wheel"/></svg></button>
    </div>

    <button class="flyout" aria-label="折叠面板"><span class="grip"></span></button>

    <div class="view-label">
      <svg class="triad" viewBox="0 0 140 88">
        <path d="M65 24H94V30H65Z" fill="#b01818"/><path d="M65 26H94V28H65Z" fill="#f08a8a"/><path d="M93 20L107 27L93 34Z" fill="#c41818"/>
        <path d="M58 32H64V60H58Z" fill="#1818b0"/><path d="M60 32H62V60H60Z" fill="#8a8af0"/><path d="M54 59H68L61 72Z" fill="#1818c4"/>
        <circle cx="61" cy="27" r="7" fill="#145a1c"/><text x="61" y="32" class="ax ay">Y</text><text x="110" y="32" class="ax axx">X</text><text x="60" y="84" class="ax az">Z</text>
      </svg>
      <p class="view-name">*上视</p>
    </div>
  </main>
</div>
</body>
</html>
```
FILE: styles.css
```css
* { box-sizing: border-box; }
html, body { height: 100%; }
body {
  margin: 0;
  font-family: "Open Sans", "Noto Sans CJK SC", sans-serif;
  font-size: 18px;
  color: #000;
  overflow: hidden;
}
button { padding: 0; border: 0; background: none; font: inherit; color: inherit; }
svg { display: block; }
.defs { position: absolute; }

.app {
  display: grid;
  grid-template-columns: 290px minmax(0, 1fr);
  grid-template-rows: 33px minmax(0, 1fr);
  height: 100vh;
  border-top: 1px solid #808080;
  background: #fff;
}

/* Command tabs */
.ribbon {
  grid-area: 1 / 1 / 2 / 3;
  z-index: 2;
  display: flex;
  justify-self: start;
}
.ribbon-tab {
  padding: 0 9px 0 8px;
  border-right: 1px solid #808080;
  border-bottom: 1px solid #808080;
  background: #d4d4d4;
  font-size: 19px;
  line-height: 32px;
  color: #1a1a1a;
  white-space: nowrap;
  text-align: center;
}
.ribbon-tab.active { background: #f7f7f7; color: #333; }
.ribbon-tab .latin { font-size: 18px; }
.assembly { width: 76px; }
.addins { width: 176px; }
.mbd { width: 57px; }
.cam { width: 182px; }
.craft { width: 96px; }
.ican { width: 111px; }

/* Feature manager panel */
.panel {
  grid-area: 2 / 1 / 3 / 2;
  display: flex;
  flex-direction: column;
  min-height: 0;
  border-right: 1px solid #808080;
  background: #f7f7f7;
}
.splitter {
  display: flex;
  justify-content: center;
  align-items: center;
  height: 26px;
  margin: 4px 2px 4px 0;
  border-top: 1px solid #c0c0c0;
  border-bottom: 1px solid #c0c0c0;
}
.grip {
  width: 10px;
  height: 10px;
  border: 1px solid #888;
  border-radius: 50%;
  background: #d8d8d8;
}
.manager-tabs {
  position: relative;
  display: flex;
  height: 38px;
  margin-right: 2px;
  border-top: 1px solid #808080;
}
.manager-tab {
  display: flex;
  justify-content: center;
  align-items: center;
  flex: 0 0 52px;
  border-right: 1px solid #808080;
  border-bottom: 1px solid #808080;
  background: #d4d4d4;
}
.manager-tab.active { flex-basis: 54px; padding-left: 4px; background: #f7f7f7; border-bottom: 0; }
.manager-tab svg { width: 28px; height: 28px; }
.manager-tab.last { flex: 1; border-right: 0; align-items: flex-start; overflow: hidden; }
.manager-tab.last svg { width: 16px; height: 16px; }
.tab-scroll {
  position: absolute;
  right: 0;
  bottom: 0;
  display: flex;
  width: 47px;
  height: 25px;
  border: 1px solid #c0c0c0;
  border-right: 0;
  background: #fff;
}
.tab-scroll button { flex: 1; display: flex; justify-content: center; align-items: center; }
.tab-scroll button + button { border-left: 1px solid #c0c0c0; }
.tab-scroll svg { width: 10px; height: 10px; }
.filter {
  height: 38px;
  margin: 0 4px 0 5px;
  padding: 4px;
  border: 1px solid #c0c0c0;
}
.filter button { display: flex; align-items: center; gap: 2px; }
.funnel { width: 28px; height: 28px; }
.down { width: 7px; height: 5px; margin-top: 6px; fill: #222; }

/* Tree */
.tree-area {
  flex: 1;
  display: grid;
  grid-template-columns: minmax(0, 1fr) 24px;
  grid-template-rows: minmax(0, 1fr) 28px;
  min-height: 0;
  margin-right: 2px;
  border-left: 1px solid #c0c0c0;
  background: #f0f0f0;
}
.tree { margin: 0; padding: 0; list-style: none; overflow: hidden; background: #f7f7f7; }
.row {
  display: flex;
  align-items: center;
  gap: 6px;
  height: 32px;
  line-height: 32px;
  white-space: pre;
}
.l0 { padding-left: 39px; }
.l1 { padding-left: 74px; }
.l2 { padding-left: 109px; }
.ico { flex: none; width: 28px; height: 28px; }
.tw { width: 20px; height: 20px; flex: none; margin: 0 6px 0 -32px; }
.tw::before {
  content: "";
  display: block;
  width: 6px;
  height: 11px;
  margin: auto;
  background: #555;
  clip-path: polygon(0 0, 100% 50%, 0 100%);
}
.tw.open::before { width: 11px; height: 6px; clip-path: polygon(0 0, 100% 0, 50% 100%); }
.vbar { display: grid; justify-items: center; grid-template-rows: 570fr 225fr 135fr; }
.vthumb { grid-row: 2; width: 5px; border-radius: 3px; background: #808080; }
.hbar { grid-column: 1 / 3; display: flex; align-items: center; padding-left: 26px; border-top: 1px solid #fff; }
.hthumb { width: 44px; height: 5px; border-radius: 3px; background: #808080; }
.foot { height: 2px; margin-right: 2px; border-top: 1px solid #c0c0c0; }

/* Graphics area */
.viewport {
  grid-area: 1 / 2 / 3 / 3;
  position: relative;
  min-width: 0;
  background:
    radial-gradient(ellipse 40% 46% at 78% 24%, rgba(208, 213, 228, 0.8), rgba(212, 217, 232, 0.4) 45%, rgba(212, 217, 232, 0) 100%),
    radial-gradient(ellipse 40% 50% at 100% 10%, rgba(228, 229, 238, 0.8), rgba(228, 229, 238, 0) 100%),
    radial-gradient(ellipse 70% 24% at 92% 42%, rgba(212, 217, 231, 0.8), rgba(214, 219, 232, 0) 100%),
    radial-gradient(ellipse 62% 17% at 10% 52%, rgba(214, 220, 234, 0.8), rgba(214, 220, 234, 0) 100%),
    linear-gradient(#fdfdfe 0, #fdfdfe 85%, #fafafd 100%);
}
.model { width: 100%; height: 100%; }
.hud {
  position: absolute;
  top: 2px;
  left: 50%;
  display: flex;
  align-items: center;
  height: 38px;
  padding-right: 6px;
  transform: translateX(-50%);
}
.tool { display: flex; justify-content: center; align-items: center; width: 38px; height: 38px; }
.tool svg { width: 28px; height: 28px; opacity: 0.9; }
.tool.pressed { margin-left: 2px; border: 1px solid #888; background: #c0c0c0; }
.caret { width: 14px; height: 38px; }
.caret::before {
  content: "";
  display: block;
  width: 7px;
  height: 4px;
  margin: auto;
  background: #888;
  clip-path: polygon(0 0, 100% 0, 50% 100%);
}
.caret.framed { border: 1px solid #999; border-left: 0; background: #e6e6ea; }
.window-controls { position: absolute; top: 9px; right: 12px; display: flex; gap: 14px; }
.window-controls svg { width: 24px; height: 24px; fill: none; stroke: #a0a0a0; }
.task-pane {
  position: absolute;
  top: 76px;
  right: 0;
  display: flex;
  flex-direction: column;
  width: 39px;
  border: 1px solid #808080;
  border-right: 0;
}
.task-pane button {
  display: flex;
  justify-content: center;
  align-items: center;
  height: 36px;
  background: #d4d4d4;
}
.task-pane .first { height: 34px; }
.task-pane button + button { border-top: 1px solid #808080; }
.task-pane .active { background: #fff; }
.task-pane svg { width: 28px; height: 28px; }
.task-pane .wide { width: 32px; height: 30px; }
.flyout {
  position: absolute;
  top: 522px;
  left: -1px;
  display: flex;
  justify-content: center;
  align-items: center;
  width: 14px;
  height: 60px;
  border: 1px solid #808080;
  border-left: 0;
  background: #f7f7f7;
}
.view-label { position: absolute; left: 0; bottom: 0; width: 140px; }
.triad { width: 140px; height: 88px; }
.ax { font-family: "Liberation Serif", serif; font-size: 15px; text-anchor: middle; }
.ay { fill: #1c9a2c; }
.axx { fill: #c41818; }
.az { fill: #1818c4; }
.view-name {
  margin: -6px 0 0;
  padding-left: 10px;
  font-family: "Liberation Mono", "Noto Sans CJK SC", monospace;
  font-weight: 500;
  font-size: 20px;
  line-height: 22px;
}
```
